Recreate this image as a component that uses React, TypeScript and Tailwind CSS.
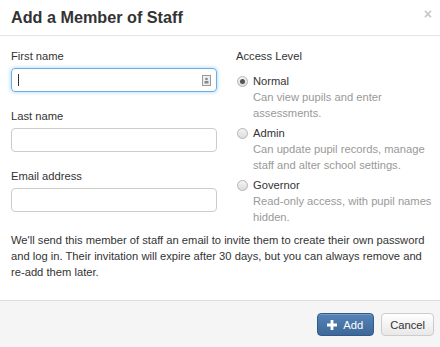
import React from "react";

const Radio = ({ checked }: { checked?: boolean }) => (
  <span className="mt-[3px] flex h-[11px] w-[11px] shrink-0 items-center justify-center rounded-full border border-[#b5b5b5] bg-gradient-to-b from-[#f4f4f4] to-[#dcdcdc]">
    {checked && <span className="h-[5px] w-[5px] rounded-full bg-[#555]" />}
  </span>
);

const Option = ({
  title,
  desc,
  checked,
}: {
  title: string;
  desc: string;
  checked?: boolean;
}) => (
  <div className="mb-[4px] flex gap-[5px] pl-[1px]">
    <Radio checked={checked} />
    <div>
      <div className="text-[#333]">{title}</div>
      <div className="text-[#999]">{desc}</div>
    </div>
  </div>
);

export default function App() {
  return (
    <div
      className="w-[440px] h-[347px] bg-white flex flex-col text-[11.2px] leading-[16px] text-[#333]"
      style={{ fontFamily: '"Liberation Sans", Arial, sans-serif' }}
    >
      <div className="relative h-[36px] border-b border-[#e5e5e5] pl-[11px] pt-[7px]">
        <h3 className="text-[16.2px] leading-[20px] font-bold text-[#333]">
          Add a Member of Staff
        </h3>
        <span className="absolute right-[8px] top-[6px] text-[14px] font-bold text-[#c8c8c8]">
          ×
        </span>
      </div>
      <div className="flex-1 pl-[11px] pr-[5px] pt-[12px]">
        <div className="flex">
          <div className="w-[206px]">
            <label className="block">First name</label>
            <div className="relative mt-[4px] h-[24px] rounded-[4px] border border-[#66afe9] shadow-[0_0_4px_rgba(102,175,233,0.6)]">
              <span className="absolute left-[6px] top-[5px] h-[12px] w-[1px] bg-[#333]" />
              <svg
                className="absolute right-[5px] top-[6px]"
                width="9"
                height="11"
                viewBox="0 0 9 11"
              >
                <rect x="0.5" y="0.5" width="8" height="10" fill="#eee" stroke="#999" />
                <circle cx="4.5" cy="4" r="1.3" fill="#888" />
                <rect x="2.5" y="6" width="4" height="2.5" fill="#888" />
              </svg>
            </div>
            <label className="mt-[16px] block">Last name</label>
            <div className="mt-[4px] h-[24px] rounded-[4px] border border-[#ccc]" />
            <label className="mt-[16px] block">Email address</label>
            <div className="mt-[4px] h-[24px] rounded-[4px] border border-[#ccc]" />
          </div>
          <div className="ml-[19px] flex-1">
            <div>Access Level</div>
            <div className="mt-[9px]">
              <Option
                checked
                title="Normal"
                desc="Can view pupils and enter assessments."
              />
              <Option
                title="Admin"
                desc="Can update pupil records, manage staff and alter school settings."
              />
              <Option
                title="Governor"
                desc="Read-only access, with pupil names hidden."
              />
            </div>
          </div>
        </div>
        <p className="mt-[3px] pr-[6px]">
          We'll send this member of staff an email to invite them to create
          their own password and log in. Their invitation will expire after 30
          days, but you can always remove and re-add them later.
        </p>
      </div>
      <div className="flex h-[47px] items-start justify-end gap-[7px] border-t border-[#ddd] bg-[#f5f5f5] pr-[6px] pt-[12px]">
        <button className="flex h-[23px] items-center gap-[6px] rounded-[4px] border border-[#2f5a8a] bg-gradient-to-b from-[#5683b6] to-[#3d6899] pl-[9px] pr-[10px] text-[11.2px] text-white shadow-[inset_0_1px_0_rgba(255,255,255,0.2)]">
          <svg width="10" height="10" viewBox="0 0 10 10">
            <path d="M3.6 0h2.8v3.6H10v2.8H6.4V10H3.6V6.4H0V3.6h3.6z" fill="#fff" />
          </svg>
          <span>Add</span>
        </button>
        <button className="h-[23px] rounded-[4px] border border-[#ccc] bg-gradient-to-b from-white to-[#e8e8e8] px-[8px] text-[11.2px] text-[#333]">
          Cancel
        </button>
      </div>
    </div>
  );
}
